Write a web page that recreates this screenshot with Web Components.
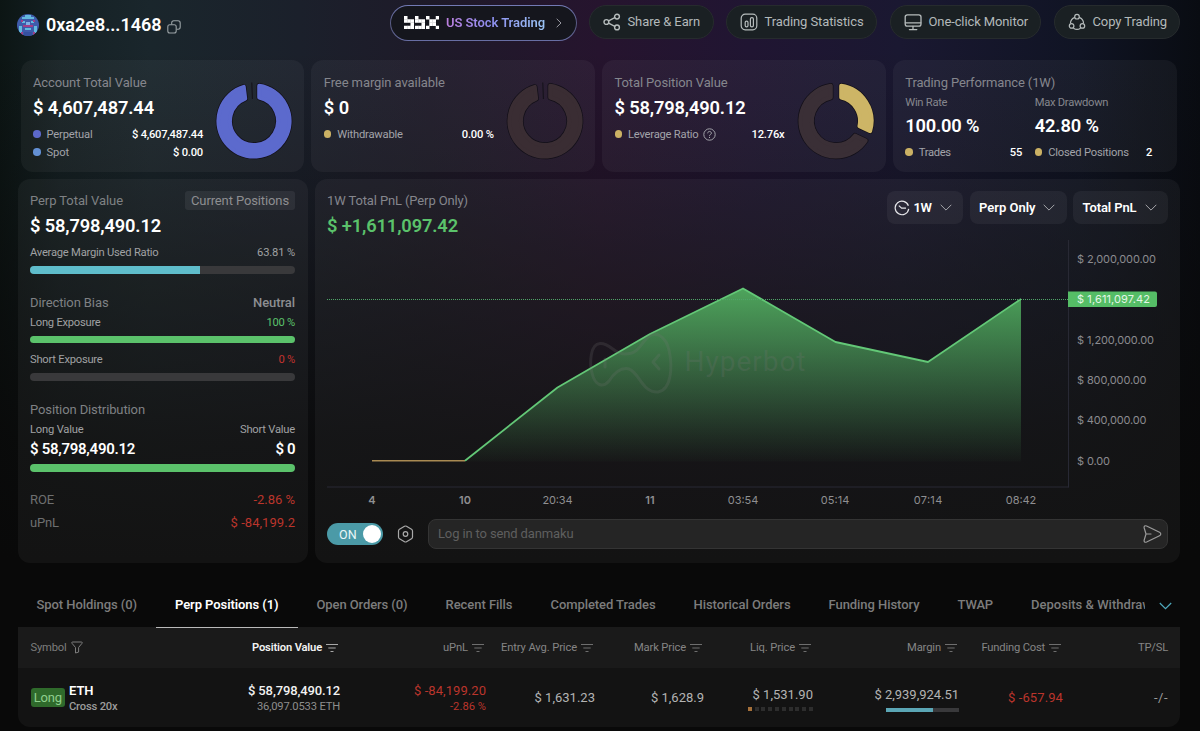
<!DOCTYPE html>
<html lang="en">
<head>
<meta charset="utf-8">
<title>Trader dashboard</title>
<style>
html,body{margin:0;height:100%;background:#090909;overflow:hidden;font-family:Roboto,"Liberation Sans",sans-serif;color:#fff}
</style>
</head>
<body>
<trader-dashboard></trader-dashboard>
<script>
const define = (name, html, setup) => customElements.define(name, class extends HTMLElement {
  connectedCallback() {
    if (this.shadowRoot) return;
    const root = this.attachShadow({ mode: 'open' });
    const t = document.createElement('template');
    t.innerHTML = typeof html === 'function' ? html(this) : html;
    root.append(t.content.cloneNode(true));
    if (setup) setup(this, root);
  }
});

/* One line of text: s = size, b = weight, c = colour, w = advance width to track the letters to. */
define('ui-text', '<style>:host{display:inline-block;flex:none;white-space:pre}</style><slot></slot>', el => {
  const s = el.style, a = n => el.getAttribute(n);
  s.fontSize = (a('s') || 13) + 'px';
  s.fontWeight = a('b') || 400;
  if (a('c')) s.color = a('c');
  if (a('w')) {
    const n = el.textContent.length;
    const gap = (parseFloat(a('w')) - el.getBoundingClientRect().width) / n;
    s.letterSpacing = gap.toFixed(3) + 'px';
  }
});

/* Horizontal row with fixed height h and top margin m. */
define('ui-row', el => `<style>:host{display:flex;align-items:center;justify-content:space-between;height:${el.getAttribute('h')}px;margin-top:${el.getAttribute('m') || 0}px}</style><slot></slot>`);

define('ui-dot', el => `<style>:host{display:block;flex:none;width:7.5px;height:7.5px;border-radius:50%;margin-right:6px;background:${el.getAttribute('c')}}</style>`);

define('meter-bar', el => `<style>
:host{display:block;overflow:hidden;border-radius:${el.getAttribute('r') || 4}px;background:#39393b;height:${el.getAttribute('h')}px;margin-top:${el.getAttribute('m')}px}
div{height:100%;width:${el.getAttribute('v')}%;background:${el.getAttribute('c') || '#5bc26b'}}</style><div></div>`);

/* Ring chart; segments are "from,to,colour,startGap,endGap" in degrees and pixels. */
define('ring-chart', el => {
  const seg = (a, b, g0, g1, i) => {
    const R = 37.6 - i, r = 22 + i;
    const p = (rad, deg, off) => {
      const t = deg * Math.PI / 180 + Math.asin(off / rad);
      return (39 + rad * Math.sin(t)).toFixed(2) + ' ' + (39 - rad * Math.cos(t)).toFixed(2);
    };
    const big = b - a > 190 ? 1 : 0;
    return `M${p(R, a, g0 + i)}A${R} ${R} 0 ${big} 1 ${p(R, b, -g1 - i)}L${p(r, b, -g1 - i)}A${r} ${r} 0 ${big} 0 ${p(r, a, g0 + i)}Z`;
  };
  const parts = el.getAttribute('segs').split(';').map(x => {
    const [a, b, c, g0, g1] = x.split(',');
    const d = seg(+a, +b, +g0, +g1, 2);
    return `<path d="${d}" fill="${c}" stroke="#120f18" stroke-width="5.4"/><path d="${d}" fill="${c}" stroke="${c}" stroke-width="4"/>`;
  }).join('');
  const sliver = el.hasAttribute('sliver') ? '<path d="M36.8 .5L37.4 17" stroke="#131018" stroke-width="1"/>' : '';
  return `<style>:host{display:block;flex:none;width:78px;height:78px}svg{display:block}</style><svg width="78" height="78" fill="none" stroke-linejoin="round">${parts}${sliver}</svg>`;
});

define('stat-card', `<style>
:host{display:flex;justify-content:space-between;box-sizing:border-box;height:112px;padding:12px 11px 0 12.5px;border-radius:12px;background:rgba(255,255,255,.042)}
.t{flex:none;width:170px}::slotted(ring-chart){margin-top:10.3px}
:host([wide]) .t{width:247px}</style><div class="t"><slot></slot></div><slot name="ring"></slot>`);

const ICONS = {
  share: '<g stroke="#b6bcbc" stroke-width="1.4"><circle cx="3.4" cy="9" r="2.4"/><circle cx="14" cy="3.6" r="2.4"/><circle cx="14" cy="14.4" r="2.4"/><path d="M5.6 7.9L11.8 4.7M5.6 10.1l6.2 3.2"/></g>',
  stats: '<g stroke="#b6bcbc" stroke-width="1.2"><rect x="1.2" y="1.2" width="15.6" height="15.6" rx="4"/><rect x="5.2" y="8.2" width="2.8" height="5.6" rx="1.3"/><rect x="10.4" y="4.6" width="3" height="9.2" rx="1.4"/></g>',
  monitor: '<g stroke="#b6bcbc" stroke-width="1.3"><rect x="1.2" y="1.8" width="15.8" height="11.4" rx="2.2"/><path d="M1.4 9.8h15.4M9 13.4v3M5.4 16.6h7.4"/></g>',
  copy: '<g stroke="#b6bcbc" stroke-width="1.2"><circle cx="9" cy="3.7" r="2.3"/><circle cx="3.6" cy="12.9" r="2.3"/><circle cx="14.4" cy="12.9" r="2.3"/><path d="M6.3 4.6C3.9 5.7 2.6 7.6 2.5 10M11.7 4.6c2.4 1.1 3.7 3 3.8 5.4M5.8 15.5c2 1.2 4.4 1.2 6.4 0"/></g>'
};
define('nav-pill', el => `<style>
:host{display:flex;align-items:center;box-sizing:border-box;flex:none;height:34px;border-radius:17px;border:1px solid #262b2d;background:#1a2023;padding-left:13px}
svg{margin-right:7px;flex:none}::slotted(ui-text){margin-bottom:1px}</style><svg width="18" height="18" fill="none" stroke-linecap="round">${ICONS[el.getAttribute('icon')]}</svg><slot></slot>`);

/* Brand wordmark drawn from square pixels. */
const brandPixels = [['X..', 'XXX', '..X', 'XXX'], ['X..', 'XXX', '..X', 'XXX'], ['X..X', '.XX.', '.XX.', 'X..X']]
  .map((rows, g) => rows.map((row, y) => [...row].map((p, x) => p === 'X' ? `<rect x="${g * 11 + x * 3.25}" y="${y * 3.25}" width="3.5" height="3.5"/>` : '').join('')).join('')).join('');

define('top-header', `<style>
:host{display:flex;height:60px;align-items:flex-start;padding:0 20px 0 17px;box-sizing:border-box}
.avatar{margin:14px 7px 0 0}.addr{margin-top:14px;line-height:22px}.cp{margin:20px 0 0 5.5px}
.us{display:flex;align-items:center;box-sizing:border-box;width:186.5px;height:36px;margin:5px 0 0 auto;padding-left:14px;border-radius:18px;border:1.5px solid transparent;
background:linear-gradient(#15161d,#15161d) padding-box,linear-gradient(180deg,#737bb6,#55577d 60%,#696fa5) border-box}
.us ui-text{margin:-1px 11px 0 7px;color:transparent;background:linear-gradient(90deg,#bd80df,#8e8ff0 45%,#9ac4f5);background-clip:text;-webkit-background-clip:text}
nav-pill{margin-top:5px}
</style>
<svg class="avatar" width="22" height="22" viewBox="0 0 22 22"><defs><clipPath id="c"><circle cx="11" cy="11" r="11"/></clipPath></defs><g clip-path="url(#c)"><rect width="22" height="22" fill="#3f5bab"/><path fill="#63b9df" d="M8 1h6v2h3v2H5V3h3zM5 7h3v2H5zM14 7h3v2h-3zM2 12h3v7H2zM17 12h3v7h-3zM8 14h6v2H8z"/><path fill="#a13f86" d="M4 6h2v2H4zM16 6h2v2h-2zM6 11h10v2H6zM4 18h2v3H4zM16 18h2v3h-2z"/><path fill="#7fb0e6" d="M9 8h4v3H9z"/><path fill="#3650a0" d="M7 18h8v4H7z"/></g></svg>
<ui-text class="addr" s="18" b="600" w="115.5">0xa2e8...1468</ui-text>
<svg class="cp" width="14" height="14" fill="none" stroke="#9aa2a5" stroke-width="1.1"><rect x=".8" y="4.8" width="8.4" height="8.2" rx="2"/><path d="M4.7 4.5V3c0-1.3.8-2.2 2.1-2.2H11c1.3 0 2.2.9 2.2 2.1v4.2c0 1.3-.8 2.1-2 2.1H9.6"/></svg>
<div class="us"><svg style="margin:-1px 0 0 -1.5px" width="35.5" height="13.5" fill="#fff">${brandPixels}</svg><ui-text s="13" b="600" w="99">US Stock Trading</ui-text><svg width="6" height="10" fill="none" stroke="#9a9aa3" stroke-width="1"><path d="M.7.8L5 5 .7 9.2"/></svg></div>
<nav-pill icon="share" style="width:125px;margin-left:12px"><ui-text c="#b3b9ba" w="72.5">Share &amp; Earn</ui-text></nav-pill>
<nav-pill icon="stats" style="width:151.5px;margin-left:12px"><ui-text c="#b3b9ba" w="99">Trading Statistics</ui-text></nav-pill>
<nav-pill icon="monitor" style="width:151.5px;margin-left:12.5px"><ui-text c="#b3b9ba" w="99.5">One-click Monitor</ui-text></nav-pill>
<nav-pill icon="copy" style="width:126.5px;margin-left:12.5px"><ui-text c="#b3b9ba" w="74.5">Copy Trading</ui-text></nav-pill>`);

const G = '#85868d', L = '#a2a3a9', Y = '#cbb164';
define('summary-cards', `<style>
:host{display:grid;grid-template-columns:repeat(4,1fr);gap:7px;margin:0 23.5px 0 20.5px}
.l{display:flex;align-items:center}
.up{position:relative;top:-1px}
.cols{display:grid;grid-template-columns:117px 117.5px;column-gap:12.5px}
</style>
<stat-card><ui-row h="20"><ui-text c="${G}" w="113.5">Account Total Value</ui-text></ui-row>
<ui-row h="24" m="4"><ui-text class="up" s="18.3" b="600" w="121">$ 4,607,487.44</ui-text></ui-row>
<ui-row h="18" m="5"><span class="l"><ui-dot c="#5c68c9"></ui-dot><ui-text s="11.2" c="${L}" w="46">Perpetual</ui-text></span><ui-text s="11.2" b="500" w="71">$ 4,607,487.44</ui-text></ui-row>
<ui-row h="18"><span class="l"><ui-dot c="#6390d4"></ui-dot><ui-text s="11.2" c="${L}" w="22.5">Spot</ui-text></span><ui-text s="11.2" b="500" w="30">$ 0.00</ui-text></ui-row>
<ring-chart slot="ring" sliver segs="0,353,#5c6acd,3.2,4"></ring-chart></stat-card>
<stat-card><ui-row h="20"><ui-text c="${G}" w="121">Free margin available</ui-text></ui-row>
<ui-row h="24" m="4"><ui-text class="up" s="18.3" b="600" w="25.5">$ 0</ui-text></ui-row>
<ui-row h="18" m="5"><span class="l"><ui-dot c="${Y}"></ui-dot><ui-text s="11.2" c="${L}" w="65.5">Withdrawable</ui-text></span><ui-text s="11.2" b="500" w="32">0.00 %</ui-text></ui-row>
<ring-chart slot="ring" sliver segs="0,353,#3a2d33,3.2,4"></ring-chart></stat-card>
<stat-card><ui-row h="20"><ui-text c="${G}" w="113">Total Position Value</ui-text></ui-row>
<ui-row h="24" m="4"><ui-text class="up" s="18.3" b="600" w="131">$ 58,798,490.12</ui-text></ui-row>
<ui-row h="18" m="5"><span class="l"><ui-dot c="${Y}"></ui-dot><ui-text s="11.2" c="${L}" w="70.5">Leverage Ratio</ui-text><svg style="margin-left:4px" width="13" height="13" fill="none" stroke="#a2a3a9"><circle cx="6.5" cy="6.5" r="5.7"/><path d="M4.7 5.3c0-2.5 3.7-2.4 3.7-.1 0 1.3-1.9 1.3-1.9 2.6M6.5 8.9v1.1"/></svg></span><ui-text s="11.2" b="500" w="33">12.76x</ui-text></ui-row>
<ring-chart slot="ring" segs="115,360,#3a2f36,3.2,3.2;0,115,#cdb566,3.2,3.2"></ring-chart></stat-card>
<stat-card wide><ui-row h="20"><ui-text c="${G}" w="150">Trading Performance (1W)</ui-text></ui-row>
<div class="cols"><ui-row h="18" m="1.5"><ui-text s="11.2" c="${G}" w="42">Win Rate</ui-text></ui-row><ui-row h="18" m="1.5"><ui-text s="11.2" c="${G}" w="73.5">Max Drawdown</ui-text></ui-row>
<ui-row h="24" m="2.5"><ui-text class="up" s="18.3" b="600" w="74">100.00 %</ui-text></ui-row><ui-row h="24" m="2.5"><ui-text class="up" s="18.3" b="600" w="64">42.80 %</ui-text></ui-row>
<ui-row h="18" m="5"><span class="l"><ui-dot c="${Y}"></ui-dot><ui-text s="11.2" c="${L}" w="32">Trades</ui-text></span><ui-text s="11.2" b="500" w="12.5">55</ui-text></ui-row><ui-row h="18" m="5"><span class="l"><ui-dot c="${Y}"></ui-dot><ui-text s="11.2" c="${L}" w="80.5">Closed Positions</ui-text></span><ui-text s="11.2" b="500">2</ui-text></ui-row></div></stat-card>`);

const P = '#7f8184', Q = '#a0a1a3';
define('positions-panel', `<style>
:host{display:block;box-sizing:border-box;width:290px;height:384px;padding:11px 13px 0 12px;border-radius:12px;background:rgba(255,255,255,.042)}
.chip{display:flex;align-items:center;justify-content:center;width:110px;height:19.5px;border-radius:3px;background:rgba(255,255,255,.065)}
.up{position:relative;top:-1px}
</style>
<ui-row h="21"><ui-text c="${P}" w="93">Perp Total Value</ui-text><span class="chip"><ui-text c="#8d8e91" w="98">Current Positions</ui-text></span></ui-row>
<ui-row h="24" m="3"><ui-text class="up" s="18.3" b="600" w="131">$ 58,798,490.12</ui-text></ui-row>
<ui-row h="18" m="5"><ui-text s="11.2" c="${Q}" w="128.5">Average Margin Used Ratio</ui-text><ui-text s="11.2" c="${Q}" w="38">63.81 %</ui-text></ui-row>
<meter-bar h="8" m="5" v="64" c="#5fbdcb"></meter-bar>
<ui-row h="20" m="18"><ui-text c="${P}" w="78.5">Direction Bias</ui-text><ui-text b="500" c="#8d8e91" w="42">Neutral</ui-text></ui-row>
<ui-row h="18" m="1"><ui-text s="11.2" c="${Q}" w="70.5">Long Exposure</ui-text><ui-text s="11.2" c="#5bc26b" w="28.5">100 %</ui-text></ui-row>
<meter-bar h="7" m="5" v="100"></meter-bar>
<ui-row h="19" m="7"><ui-text s="11.2" c="${Q}" w="72.5">Short Exposure</ui-text><ui-text s="11.2" c="#c3332e" w="16.5">0 %</ui-text></ui-row>
<meter-bar h="8" m="4" v="0"></meter-bar>
<ui-row h="20" m="18"><ui-text c="${P}" w="115">Position Distribution</ui-text></ui-row>
<ui-row h="18" m="1"><ui-text s="11.2" c="${Q}" w="53.5">Long Value</ui-text><ui-text s="11.2" c="${Q}" w="55">Short Value</ui-text></ui-row>
<ui-row h="20" m="1"><ui-text s="15" b="600" w="105">$ 58,798,490.12</ui-text><ui-text s="15" b="600" w="19.5">$ 0</ui-text></ui-row>
<meter-bar h="8" m="5" v="100"></meter-bar>
<ui-row h="20" m="18"><ui-text class="up" c="#6e6f70" w="24">ROE</ui-text><ui-text class="up" c="#bb352c" w="41.5">-2.86 %</ui-text></ui-row>
<ui-row h="20" m="3"><ui-text class="up" c="#6e6f70" w="29">uPnL</ui-text><ui-text class="up" c="#bb352c" w="64.5">$ -84,199.2</ui-text></ui-row>`);

define('select-box', el => `<style>
:host{display:flex;align-items:center;justify-content:space-between;box-sizing:border-box;height:33px;padding:0 11.5px 0 ${el.getAttribute('pl') || 9.5}px;border-radius:8px;background:rgba(255,255,255,.052)}
span{display:flex;align-items:center;gap:3.5px}::slotted(ui-text){margin:-1px 0 0}</style><span><slot></slot></span><svg width="12" height="7" fill="none" stroke="#a5a6aa" stroke-width="1"><path d="M.7.8L6 6.1 11.3.8"/></svg>`);

/* Area chart; the viewBox origin is the panel's inner left edge and the top of the axis. */
const axisY = [['$ 2,000,000.00', 19, 79], ['$ 1,200,000.00', 100, 77], ['$ 800,000.00', 140, 69.5], ['$ 400,000.00', 180, 69.5], ['$ 0.00', 221, 33]];
const axisX = [['4', 45, 0, 600], ['10', 138, 0, 600], ['20:34', 230.5, 30, 400], ['11', 323, 0, 600], ['03:54', 416, 30.5, 400], ['05:14', 508, 28.5, 400], ['07:14', 601, 28.5, 400], ['08:42', 694, 30.5, 400]];
define('pnl-chart', `<style>:host{display:block;height:272px}svg{display:block;font-family:Inter,Roboto,sans-serif;font-size:11px}</style>
<svg width="841" height="272" fill="none"><defs><linearGradient id="g" x1="0" y1="48" x2="0" y2="222" gradientUnits="userSpaceOnUse"><stop offset="0" stop-color="#54b763" stop-opacity=".88"/><stop offset="1" stop-color="#54b763" stop-opacity=".02"/></linearGradient></defs>
<path d="M138 221.5L230.5 148 323 94.5 416 48.5 508.5 102 601 122.5 694 59V221.5Z" fill="url(#g)"/>
<path d="M45 220.7H138" stroke="#a98a52" stroke-width="1.6"/>
<path d="M138 220.7L230.5 147.5 323 94 416 48.5 508.5 102 601 122 694 59" stroke="#63c877" stroke-width="1.8" stroke-linejoin="round"/>
<path d="M0 59.5H741" stroke="#4fa468" stroke-dasharray="1 1"/>
<path d="M0 247H741.5M741.5 0V247.5" stroke="#282934"/>
<g stroke="#767676" stroke-opacity=".2" stroke-width="3" stroke-linecap="round" stroke-linejoin="round"><path d="M273 103.5C263 104 262.5 123 265 133C268 146 276 148 282 141C288 132 294 127 302 129C312 132 315 153 331 152C344 150 346 128 342 110C339 97 329 90 321 97C313 104 312 114 298 114C286 114 284 103 273 103.5Z"/><path d="M278 119v8M332 115l-6 7 6 7"/></g>
<text x="357.5" y="131" textLength="121" fill="#767676" fill-opacity=".22" style="font-size:28px;font-family:Roboto">Hyperbot</text>
<path d="M741 51.5h87a2 2 0 0 1 2 2v11.5a2 2 0 0 1-2 2h-87z" fill="#55bd66"/>
<text x="750" y="62.5" textLength="73" fill="#e4f6e6">$ 1,611,097.42</text>
${axisY.map(([t, y, w]) => `<text x="750" y="${y + 4}" textLength="${w}" fill="#8b8b8f">${t}</text>`).join('')}
${axisX.map(([t, x, w, b]) => `<text x="${x}" y="264" text-anchor="middle" font-weight="${b}" ${w ? `textLength="${w}"` : ''} fill="#8f8f91">${t}</text>`).join('')}
</svg>`);

define('chart-panel', `<style>
:host{display:block;box-sizing:border-box;flex:1;height:384px;padding:11px 12px 0;border-radius:12px;background:rgba(255,255,255,.042)}
.top{display:flex;height:50px}.top>div{flex:1}.top select-box{margin-top:1px;margin-left:6.5px}
.up{position:relative;top:-1px}
.bar{display:flex;align-items:center;margin-top:7px;height:30px}
.tog{display:flex;align-items:center;justify-content:space-between;box-sizing:border-box;width:56px;height:22px;padding:0 2px 0 12px;border-radius:11px;background:#4b9aa7}
.tog i{width:18px;height:18px;border-radius:50%;background:#fff}
.hex{margin:0 14px 0 14px}
.in{flex:1;display:flex;align-items:center;justify-content:space-between;box-sizing:border-box;height:30px;padding:0 5px 0 9px;border:1px solid #343434;border-radius:8px;background:#252525}
.in ui-text{margin-bottom:1px}
</style>
<div class="top"><div><ui-row h="21"><ui-text c="#85868d" w="141">1W Total PnL (Perp Only)</ui-text></ui-row><ui-row h="24" m="3"><ui-text class="up" s="18.3" b="600" c="#5bc26b" w="131">$ +1,611,097.42</ui-text></ui-row></div>
<select-box pl="7" style="width:76px"><svg width="16" height="16" fill="none" stroke="#e6e6ea" stroke-width="1.2"><path d="M14.4 5.7A6.8 6.8 0 1 0 14.7 8.8"/><path d="M4.8 5.6L7.6 8.1H12"/></svg><ui-text b="600" w="18">1W</ui-text></select-box>
<select-box style="width:97px"><ui-text b="600" w="56.5">Perp Only</ui-text></select-box>
<select-box style="width:95px"><ui-text b="600" w="54">Total PnL</ui-text></select-box></div>
<pnl-chart></pnl-chart>
<div class="bar"><div class="tog"><ui-text s="12.5" c="#e9f6f7" w="18">ON</ui-text><i></i></div>
<svg class="hex" width="17" height="18" fill="none" stroke="#a9a9a9" stroke-width="1.2"><path d="M7.5 1.3q1-.6 2 0l5 2.9q1 .6 1 1.7v6.2q0 1.1-1 1.7l-5 2.9q-1 .6-2 0l-5-2.9q-1-.6-1-1.7V5.9q0-1.1 1-1.7z"/><circle cx="8.5" cy="9" r="2.3"/></svg>
<div class="in"><ui-text c="#5f5f5f" w="135.5">Log in to send danmaku</ui-text><svg width="19" height="18" fill="none" stroke="#9b9b9b" stroke-width="1.2" stroke-linejoin="round" stroke-linecap="round"><path d="M1.2 3C.8 1.2 2 .3 3.6 1L16.5 7.3c1.7.8 1.7 2.6 0 3.4L3.6 17C2 17.700.8 16.8 1.2 15L3 9zM3.2 9H8"/></svg></div></div>`);

const tabs = [['Spot Holdings (0)', 100.5], ['Perp Positions (1)', 103.5], ['Open Orders (0)', 91], ['Recent Fills', 67], ['Completed Trades', 105], ['Historical Orders', 97], ['Funding History', 91], ['TWAP', 35.5], ['Deposits & Withdrawals', 138]];
define('tab-strip', `<style>
:host{display:flex;height:45px;margin:20px 20px -1px 17.5px;position:relative;z-index:1}
.s{display:flex;width:1127.5px;overflow:hidden}
.s div{display:flex;align-items:center;flex:none;box-sizing:border-box;height:45px;padding:0 19px 2px}
.s .on{border-bottom:1px solid #b9b9b9;padding-bottom:1px}
svg{margin:19px 0 0 14px}
</style><div class="s">${tabs.map(([t, w], i) => `<div class="${i === 1 ? 'on' : ''}"><ui-text b="${i === 1 ? 600 : 500}" c="${i === 1 ? '#fff' : '#7c7c7c'}" w="${w}">${t.replace('&', '&amp;')}</ui-text></div>`).join('')}</div>
<svg width="13" height="8" fill="none" stroke="#4fa9bd" stroke-width="1.2"><path d="M.8 1l5.7 5.6L12.2 1"/></svg>`);

const heads = [['Position Value', 70], ['uPnL', 25], ['Entry Avg. Price', 76], ['Mark Price', 52], ['Liq. Price', 45], ['Margin', 34], ['Funding Cost', 63.5]];
define('positions-table', `<style>
:host{display:block;margin:0 20px 0 18px;border-radius:0 0 12px 12px;overflow:hidden;background:#131313}
.r{display:grid;grid-template-columns:182px 140px 146px 109px 109px 109px 146px 104px 105px;align-items:center;padding-right:12px}
.h{height:41px;background:#1a1a1a}.b{height:59px}
.r>div{display:flex;flex-direction:column;align-items:flex-end;gap:3px}
.h>div{flex-direction:row;align-items:center;justify-content:flex-end;gap:4px;padding-right:2px}
.h>div:last-child{padding-right:0}
.r>div:first-child{flex-direction:row;align-items:center;justify-content:flex-start;gap:0;padding-left:12.5px}
.h>div:first-child svg{margin-left:4.5px}
.badge{display:flex;align-items:center;justify-content:center;flex:none;width:34.5px;height:19px;border-radius:3px;background:#2f6a2b}
.sym{display:flex;flex-direction:column;align-items:flex-start;gap:1px;margin-left:4px;padding-top:2px}
.dots{display:flex;gap:2.8px;height:4px}.dots i{width:4px;height:4px;background:#2d2d2d}.dots i:first-child{background:#a5703a}
ui-text{line-height:15px}
</style>
<div class="r h"><div><ui-text s="11.2" c="#7d7d7d" w="36">Symbol</ui-text><svg width="12" height="13" fill="none" stroke="#7d7d7d" stroke-linejoin="round"><path d="M1.2 1h9.6q.7.6.2 1.3L7.6 6.5v4.6L4.5 12V6.5L1 2.3Q.5 1.5 1.2 1z"/></svg></div>
${heads.map(([t, w], i) => `<div><ui-text s="11.2" b="${i ? 400 : 600}" c="${i ? '#858585' : '#f2f2f2'}" w="${w}">${t}</ui-text><svg width="12" height="9" stroke="${i ? '#6e6e6e' : '#a8a8a8'}" stroke-width="1.1"><path d="M0 1.5h12M2.3 5h7.4M4.5 8.500h3"/></svg></div>`).join('')}
<div><ui-text s="11.2" c="#858585" w="30">TP/SL</ui-text></div></div>
<div class="r b"><div><span class="badge"><ui-text s="13" c="#8fcf8d" w="28">Long</ui-text></span><span class="sym"><ui-text s="13" b="600" w="24.5">ETH</ui-text><ui-text s="11.2" b="500" c="#9c9c9c" w="48.5">Cross 20x</ui-text></span></div>
<div style="gap:1px;padding-top:2px"><ui-text b="500" c="#f2f2f2" w="92">$ 58,798,490.12</ui-text><ui-text s="11.2" c="#8d8d8d" w="83">36,097.0533 ETH</ui-text></div>
<div style="gap:1px;padding-top:2px"><ui-text c="#bb352c" w="72">$ -84,199.20</ui-text><ui-text s="11.2" c="#bb352c" w="36">-2.86 %</ui-text></div>
<div><ui-text s="13" c="#b3b3b3" w="60.5">$ 1,631.23</ui-text></div>
<div><ui-text s="13" c="#b3b3b3" w="53">$ 1,628.9</ui-text></div>
<div style="gap:5px;margin-top:3px"><ui-text s="13" c="#b3b3b3" w="60.5">$ 1,531.90</ui-text><span class="dots">${'<i></i>'.repeat(10)}</span></div>
<div style="margin-top:3px"><ui-text s="13" c="#b3b3b3" w="84.5">$ 2,939,924.51</ui-text><meter-bar style="width:73px" h="4" m="3" r="0" v="64" c="#5ba6b5"></meter-bar></div>
<div><ui-text s="13" c="#bb352c" w="55">$ -657.94</ui-text></div>
<div><ui-text s="13" c="#9c9c9c" w="14">-/-</ui-text></div></div>`);

define('trader-dashboard', `<style>
:host{display:block;height:731px;overflow:hidden;background:
linear-gradient(180deg,rgba(9,9,9,0) 50px,rgba(9,9,9,.25) 180px,rgba(9,9,9,.62) 320px,rgba(9,9,9,.88) 440px,#090909 560px),
linear-gradient(90deg,#0c1514 0,#152124 60px,#1a262c 150px,#1b202b 300px,#1e1a29 430px,#26142e 600px,#201532 750px,#1a1831 900px,#101424 1080px,#090c12 1200px)}
.main{display:flex;gap:7px;margin:7px 20px 0 18px}
</style><top-header></top-header><summary-cards></summary-cards><div class="main"><positions-panel></positions-panel><chart-panel></chart-panel></div><tab-strip></tab-strip><positions-table></positions-table>`);
</script>
</body>
</html>
